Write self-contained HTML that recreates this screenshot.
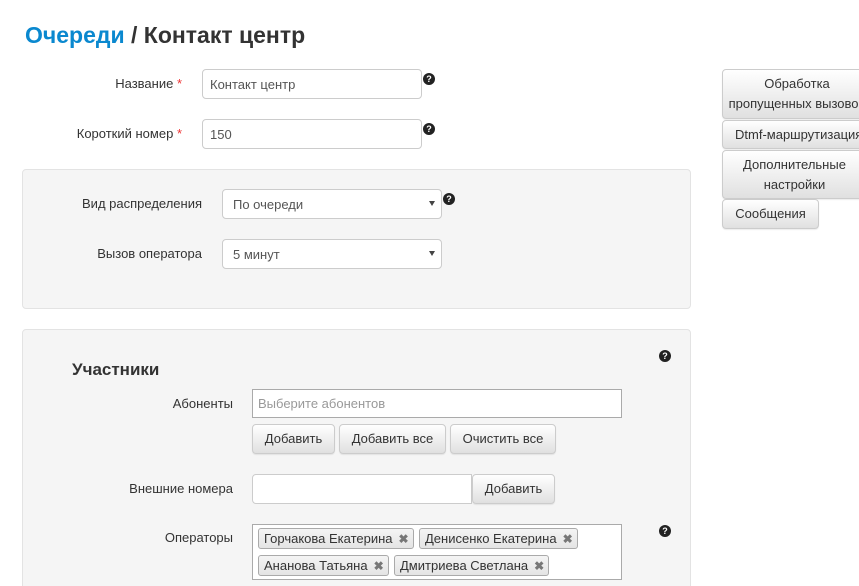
<!DOCTYPE html>
<html style="overflow:hidden;height:586px"><head><meta charset="utf-8"><style>
body{margin:0;width:859px;height:586px;overflow:hidden;background:#fff;font-family:"Liberation Sans",sans-serif;font-size:13px;color:#333;position:relative}
.a{position:absolute}
.lbl{position:absolute;text-align:right;font-size:13px;color:#333}
.req{color:#e33}
.inp{position:absolute;box-sizing:border-box;border:1px solid #ccc;border-radius:4px;background:#fff;padding:0 7px;font-size:13px;display:flex;align-items:center;color:#555}
.q{position:absolute;width:12px;height:12px;border-radius:50%;background:#222;color:#fff;font-size:9px;font-weight:bold;text-align:center;line-height:12px}
.panel{position:absolute;left:22px;width:669px;box-sizing:border-box;background:#f5f5f5;border:1px solid #e3e3e3;border-radius:4px}
.btn{position:absolute;box-sizing:border-box;border:1px solid #ccc;border-radius:4px;background:linear-gradient(#fff,#e0e0e0);font-size:13px;color:#333;display:flex;align-items:center;justify-content:center;text-align:center;line-height:22px;box-shadow:0 1px 1px rgba(0,0,0,.08)}
.arr{position:absolute;right:6px;top:11px;width:0;height:0;border-left:3px solid transparent;border-right:3px solid transparent;border-top:5px solid #444}
.tag{position:absolute;box-sizing:border-box;height:21px;border:1px solid #aaa;border-radius:3px;background:linear-gradient(#f4f4f4,#e4e4e4);font-size:13px;line-height:19px;padding-left:5px;color:#333;white-space:nowrap}
.tag b{color:#777;margin-left:6px;font-size:12px}
</style></head><body>
<div class="a" style="left:25px;top:22px;font-size:23px;font-weight:bold;color:#333"><span style="color:#0a88cf">Очереди</span> / Контакт центр</div>

<div class="lbl" style="left:40px;width:142px;top:76px">Название <span class="req">*</span></div>
<div class="inp" style="left:202px;top:69px;width:220px;height:30px">Контакт центр</div>
<div class="q" style="left:423px;top:73px">?</div>
<div class="lbl" style="left:40px;width:142px;top:126px">Короткий номер <span class="req">*</span></div>
<div class="inp" style="left:202px;top:119px;width:220px;height:30px">150</div>
<div class="q" style="left:423px;top:123px">?</div>

<div class="panel" style="top:169px;height:140px"></div>
<div class="lbl" style="left:40px;width:162px;top:196px">Вид распределения</div>
<div class="inp" style="left:222px;top:189px;width:220px;height:30px;padding-left:10px">По очереди<div class="arr"></div></div>
<div class="q" style="left:443px;top:193px">?</div>
<div class="lbl" style="left:40px;width:162px;top:246px">Вызов оператора</div>
<div class="inp" style="left:222px;top:239px;width:220px;height:30px;padding-left:10px">5 минут<div class="arr"></div></div>

<div class="panel" style="top:329px;height:280px"></div>
<div class="a" style="left:72px;top:360px;font-size:17px;font-weight:bold;color:#333">Участники</div>
<div class="q" style="left:659px;top:350px">?</div>
<div class="lbl" style="left:60px;width:173px;top:396px">Абоненты</div>
<div class="inp" style="left:252px;top:389px;width:370px;height:29px;border-radius:0;border-color:#aaa;color:#999;padding-left:5px">Выберите абонентов</div>
<div class="btn" style="left:252px;top:424px;width:83px;height:30px">Добавить</div>
<div class="btn" style="left:339px;top:424px;width:107px;height:30px">Добавить все</div>
<div class="btn" style="left:450px;top:424px;width:106px;height:30px">Очистить все</div>
<div class="lbl" style="left:60px;width:173px;top:481px">Внешние номера</div>
<div class="inp" style="left:252px;top:474px;width:220px;height:30px;border-radius:4px 0 0 4px"></div>
<div class="btn" style="left:472px;top:474px;width:83px;height:30px">Добавить</div>
<div class="lbl" style="left:60px;width:173px;top:530px">Операторы</div>
<div class="a" style="left:252px;top:524px;width:370px;height:56px;box-sizing:border-box;border:1px solid #aaa;background:#fff"></div>
<div class="tag" style="left:258px;top:528px;width:156px">Горчакова Екатерина<b>✖</b></div>
<div class="tag" style="left:419px;top:528px;width:159px">Денисенко Екатерина<b>✖</b></div>
<div class="tag" style="left:258px;top:555px;width:131px">Ананова Татьяна<b>✖</b></div>
<div class="tag" style="left:394px;top:555px;width:155px">Дмитриева Светлана<b>✖</b></div>
<div class="q" style="left:659px;top:525px">?</div>

<div class="btn" style="left:722px;top:69px;width:150px;height:50px;padding:0 4px;white-space:nowrap;display:block;line-height:20px;padding-top:4px">Обработка<br>пропущенных вызовов</div>
<div class="btn" style="left:722px;top:120px;width:145px;height:29px;justify-content:flex-start;padding-left:12px;white-space:nowrap">Dtmf-маршрутизация</div>
<div class="btn" style="left:722px;top:150px;width:145px;height:49px;display:block;line-height:20px;padding-top:4px">Дополнительные<br>настройки</div>
<div class="btn" style="left:722px;top:199px;width:97px;height:30px">Сообщения</div>
</body></html>
